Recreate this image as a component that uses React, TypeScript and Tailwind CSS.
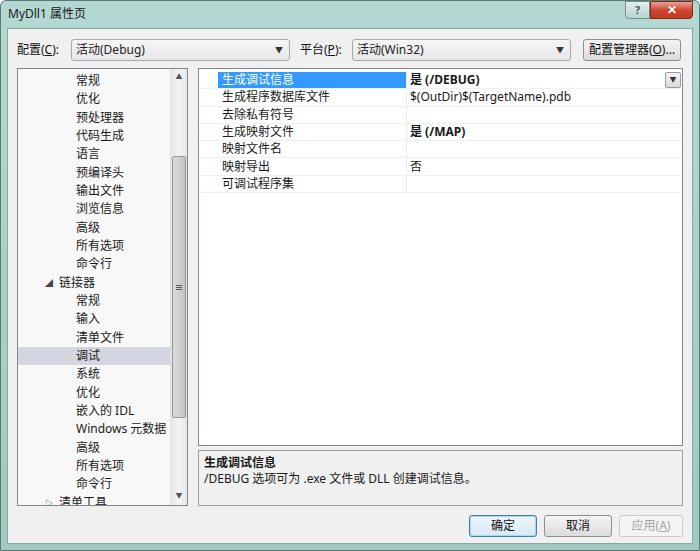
import React from 'react';

const font = { fontFamily: '"Noto Sans", "Noto Sans CJK SC", sans-serif' };

interface TreeItem {
  label: string;
  level: 1 | 2;
  expanded?: boolean;
  selected?: boolean;
}

const treeItems: TreeItem[] = [
  { label: '常规', level: 2 },
  { label: '优化', level: 2 },
  { label: '预处理器', level: 2 },
  { label: '代码生成', level: 2 },
  { label: '语言', level: 2 },
  { label: '预编译头', level: 2 },
  { label: '输出文件', level: 2 },
  { label: '浏览信息', level: 2 },
  { label: '高级', level: 2 },
  { label: '所有选项', level: 2 },
  { label: '命令行', level: 2 },
  { label: '链接器', level: 1, expanded: true },
  { label: '常规', level: 2 },
  { label: '输入', level: 2 },
  { label: '清单文件', level: 2 },
  { label: '调试', level: 2, selected: true },
  { label: '系统', level: 2 },
  { label: '优化', level: 2 },
  { label: '嵌入的 IDL', level: 2 },
  { label: 'Windows 元数据', level: 2 },
  { label: '高级', level: 2 },
  { label: '所有选项', level: 2 },
  { label: '命令行', level: 2 },
  { label: '清单工具', level: 1, expanded: false },
];

const props = [
  { name: '生成调试信息', value: '是 (/DEBUG)', bold: true, selected: true },
  { name: '生成程序数据库文件', value: '$(OutDir)$(TargetName).pdb' },
  { name: '去除私有符号', value: '' },
  { name: '生成映射文件', value: '是 (/MAP)', bold: true },
  { name: '映射文件名', value: '' },
  { name: '映射导出', value: '否' },
  { name: '可调试程序集', value: '' },
];

const Combo: React.FC<{ text: string; width: string }> = ({ text, width }) => (
  <div
    className={`${width} h-[22px] flex items-center justify-between pl-[4px] pr-[6px] border border-[#a9a9a9] rounded-[3px] bg-gradient-to-b from-[#f6f6f6] to-[#e6e6e6] text-[12px] text-[#222]`}
  >
    <span>{text}</span>
    <span className="text-[8px] text-[#333]">▼</span>
  </div>
);

const Button: React.FC<{ children: React.ReactNode; width: string; focus?: boolean; disabled?: boolean }> = ({
  children,
  width,
  focus,
  disabled,
}) => (
  <div
    className={`${width} h-[22px] flex items-center justify-center rounded-[3px] text-[12px] border ${
      disabled
        ? 'border-[#c9c9c9] bg-[#f4f4f4] text-[#a3a3a3]'
        : focus
        ? 'border-[#3c7fb1] bg-gradient-to-b from-[#eef6fb] to-[#d6e9f5] text-[#111] shadow-[inset_0_0_0_1px_#a8d8f0]'
        : 'border-[#8e8f8f] bg-gradient-to-b from-[#f4f4f4] to-[#dcdcdc] text-[#111]'
    }`}
  >
    {children}
  </div>
);

export default function App() {
  return (
    <div
      className="w-[700px] h-[551px] flex flex-col bg-gradient-to-b from-[#b3d9d2] via-[#a9d0c9] to-[#9fc9c1] border border-[#5a7a76] rounded-t-[6px] overflow-hidden"
      style={font}
    >
      {/* title bar */}
      <div className="h-[27px] flex items-start justify-between">
        <div className="pl-[7px] pt-[4px] text-[12px] text-[#1a1a1a]">MyDll1 属性页</div>
        <div className="flex mr-[6px]">
          <div className="w-[25px] h-[18px] flex items-center justify-center border border-[#6f8f8b] rounded-bl-[4px] bg-gradient-to-b from-[#e3f0ee] to-[#b7d3ce] text-[11px] font-bold text-[#3c5a57]">
            ?
          </div>
          <div className="w-[43px] h-[18px] flex items-center justify-center border border-[#7a2a20] rounded-br-[4px] bg-gradient-to-b from-[#e8a193] via-[#d0452f] to-[#c33a21] text-[12px] font-bold text-white">
            ✕
          </div>
        </div>
      </div>

      {/* client */}
      <div className="flex-1 mx-[6px] mb-[6px] bg-[#f0f0f0] border border-[#8ba7a2] flex flex-col px-[9px] pt-[10px]">
        {/* config row */}
        <div className="h-[22px] flex items-center text-[12px] text-[#111]">
          <span className="w-[54px]">
            配置(<span className="underline">C</span>):
          </span>
          <Combo text="活动(Debug)" width="w-[219px]" />
          <span className="w-[52px] ml-[10px]">
            平台(<span className="underline">P</span>):
          </span>
          <Combo text="活动(Win32)" width="w-[219px]" />
          <div className="ml-[12px]">
            <Button width="w-[98px]">
              配置管理器(<span className="underline">O</span>)...
            </Button>
          </div>
        </div>

        {/* panels */}
        <div className="flex gap-[10px] mt-[7px] h-[438px]">
          {/* tree */}
          <div className="w-[171px] h-full border border-[#828790] bg-[#f8f8f8] flex overflow-hidden">
            <div className="flex-1 pt-[3px] overflow-hidden">
              {treeItems.map((it, i) => (
                <div
                  key={i}
                  className={`h-[18.33px] flex items-center text-[12px] text-[#1a1a1a] ${
                    it.selected ? 'bg-[#d4d6df]' : ''
                  } ${it.level === 1 ? 'pl-[27px]' : 'pl-[58px]'}`}
                >
                  {it.level === 1 && (
                    <span className="w-[14px] text-[8px] text-[#444]">{it.expanded ? '◢' : '▷'}</span>
                  )}
                  {it.label}
                </div>
              ))}
            </div>
            {/* scrollbar */}
            <div className="w-[17px] h-full bg-gradient-to-r from-[#e6e6e6] via-[#f3f3f3] to-[#e6e6e6] border-l border-[#e2e2e2] flex flex-col items-center">
              <div className="h-[17px] flex items-center justify-center text-[7px] text-[#555]">▲</div>
              <div className="h-[70px]" />
              <div className="w-[14px] h-[262px] rounded-[2px] border border-[#979797] bg-gradient-to-r from-[#dcdcdc] via-[#d0d0d0] to-[#c2c2c2] flex items-center justify-center">
                <div className="flex flex-col gap-[1px]">
                  <div className="w-[6px] h-[1px] bg-[#555]" />
                  <div className="w-[6px] h-[1px] bg-[#555]" />
                  <div className="w-[6px] h-[1px] bg-[#555]" />
                </div>
              </div>
              <div className="flex-1" />
              <div className="h-[17px] flex items-center justify-center text-[7px] text-[#555]">▼</div>
            </div>
          </div>

          {/* right side */}
          <div className="flex-1 flex flex-col gap-[4px]">
            <div className="h-[378px] border border-[#828790] bg-white pt-[3px] flex flex-col">
              {props.map((p, i) => (
                <div key={i} className="h-[17.3px] flex text-[12px] border-b border-[#f0f0f0]">
                  <div className="w-[19px]" />
                  <div
                    className={`w-[189px] flex items-center pl-[4px] border-r border-[#ececec] ${
                      p.selected ? 'bg-[#3399ff] text-white' : 'text-[#1a1a1a]'
                    }`}
                  >
                    {p.name}
                  </div>
                  <div className={`flex-1 flex items-center pl-[3px] text-[#1a1a1a] ${p.bold ? 'font-bold' : ''}`}>
                    {p.value}
                  </div>
                  {p.selected && (
                    <div className="w-[16px] h-[16px] mr-[1px] border border-[#9a9a9a] rounded-[2px] bg-gradient-to-b from-[#f5f5f5] to-[#dcdcdc] flex items-center justify-center text-[7px] text-[#333]">
                      ▼
                    </div>
                  )}
                </div>
              ))}
            </div>
            <div className="flex-1 border border-[#a0a0a0] bg-[#f0f0f0] px-[5px] pt-[4px] text-[12px] text-[#1a1a1a] leading-[16px]">
              <div className="font-bold">生成调试信息</div>
              <div>/DEBUG 选项可为 .exe 文件或 DLL 创建调试信息。</div>
            </div>
          </div>
        </div>

        {/* bottom buttons */}
        <div className="flex justify-end gap-[7px] mt-[9px]">
          <Button width="w-[68px]" focus>
            确定
          </Button>
          <Button width="w-[68px]">取消</Button>
          <Button width="w-[64px]" disabled>
            应用(<span className="underline">A</span>)
          </Button>
        </div>
      </div>
    </div>
  );
}
